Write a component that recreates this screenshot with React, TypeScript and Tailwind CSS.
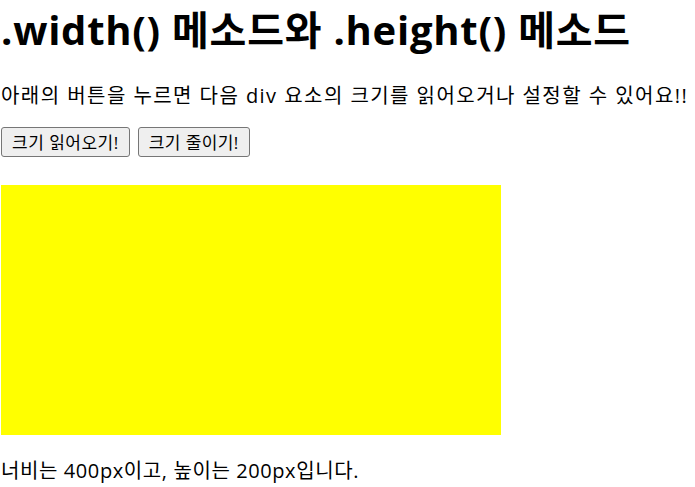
export default function App() {
  const font = { fontFamily: '"Open Sans", "Noto Sans CJK KR", sans-serif' };
  return (
    <div className="bg-white text-black min-h-[487px] pl-[1px] pt-[6px]" style={font}>
      <h1 className="text-[40px] font-bold leading-[48px] m-0 tracking-[0.75px] whitespace-nowrap">.width() 메소드와 .height() 메소드</h1>
      <p className="text-[20px] leading-[28px] mt-[28px] whitespace-nowrap tracking-[1.45px]">아래의 버튼을 누르면 다음 div 요소의 크기를 읽어오거나 설정할 수 있어요!!</p>
      <div className="flex gap-[8px] mt-[17px]">
        <button className="h-[30px] px-[10px] text-[17px] tracking-[0.5px] bg-[#efefef] border border-[#767676] rounded-[3px] leading-none">크기 읽어오기!</button>
        <button className="h-[30px] px-[10px] text-[17px] tracking-[0.4px] bg-[#efefef] border border-[#767676] rounded-[3px] leading-none">크기 줄이기!</button>
      </div>
      <div className="w-[500px] h-[250px] bg-[#ffff00] mt-[28px]"></div>
      <p className="text-[20px] leading-[28px] mt-[22px] tracking-[0.6px]">너비는 400px이고, 높이는 200px입니다.</p>
    </div>
  );
}
